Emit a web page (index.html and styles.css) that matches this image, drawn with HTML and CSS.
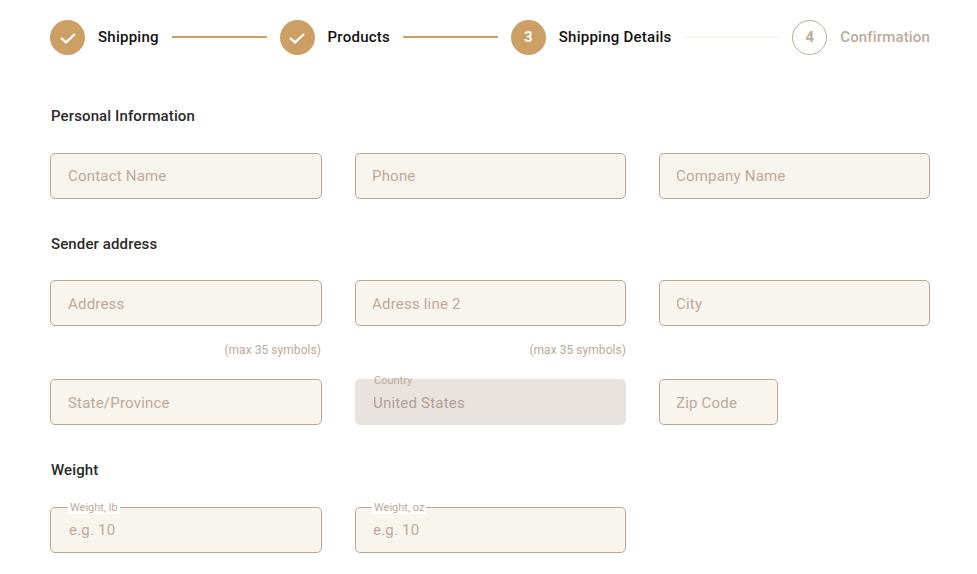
FILE: index.html
```html
<!DOCTYPE html>
<html lang="en">
<head>
    <meta charset="UTF-8">
    <meta name="viewport" content="width=device-width, initial-scale=1.0">
    <title>Shipping Details</title>
    <link rel="stylesheet" href="styles.css">
</head>
<body>
    <div class="container">
        <div class="stepper">
            <div class="step done">
                <span class="step-circle">
                    <svg width="16" height="12" viewBox="0 0 16 12"><path d="M1 6 L6 10.4 L15 2" fill="none" stroke="#fff" stroke-width="2.2"/></svg>
                </span>
                <span class="step-name">Shipping</span>
            </div>
            <div class="step-line"></div>
            <div class="step done">
                <span class="step-circle">
                    <svg width="16" height="12" viewBox="0 0 16 12"><path d="M1 6 L6 10.4 L15 2" fill="none" stroke="#fff" stroke-width="2.2"/></svg>
                </span>
                <span class="step-name">Products</span>
            </div>
            <div class="step-line"></div>
            <div class="step done">
                <span class="step-circle number">3</span>
                <span class="step-name">Shipping Details</span>
            </div>
            <div class="step-line todo"></div>
            <div class="step todo">
                <span class="step-circle number">4</span>
                <span class="step-name">Confirmation</span>
            </div>
        </div>

        <h2 class="section-title first">Personal Information</h2>
        <div class="form-row">
            <input type="text" placeholder="Contact Name">
            <input type="text" placeholder="Phone">
            <input type="text" placeholder="Company Name">
        </div>

        <h2 class="section-title tight">Sender address</h2>
        <div class="form-row low">
            <div class="field">
                <input type="text" placeholder="Address">
                <p class="hint">(max 35 symbols)</p>
            </div>
            <div class="field">
                <input type="text" placeholder="Adress line 2">
                <p class="hint">(max 35 symbols)</p>
            </div>
            <div class="field">
                <input type="text" placeholder="City">
            </div>
        </div>
        <div class="form-row low second">
            <input type="text" placeholder="State/Province">
            <div class="field">
                <label class="float-label plain">Country</label>
                <input class="disabled" type="text" value="United States" disabled>
            </div>
            <input class="zip" type="text" placeholder="Zip Code">
        </div>

        <h2 class="section-title">Weight</h2>
        <div class="form-row">
            <div class="field">
                <label class="float-label">Weight, lb</label>
                <input class="small-pad" type="text" placeholder="e.g. 10">
            </div>
            <div class="field">
                <label class="float-label">Weight, oz</label>
                <input class="small-pad" type="text" placeholder="e.g. 10">
            </div>
        </div>
    </div>
</body>
</html>
```

FILE: styles.css
```css
body {
    font-family: Roboto, 'Liberation Sans', sans-serif;
    margin: 0;
    padding: 0;
    background-color: #fff;
    color: #222;
}
.container {
    width: 880px;
    margin-left: 50px;
    padding-top: 20px;
}
.stepper {
    display: flex;
    align-items: center;
    height: 35px;
}
.step {
    display: flex;
    align-items: center;
    gap: 13px;
}
.step-circle {
    width: 35px;
    height: 35px;
    border-radius: 50%;
    box-sizing: border-box;
    background-color: #cc9f64;
    color: #fff;
    font-size: 15px;
    font-weight: 700;
    display: flex;
    justify-content: center;
    align-items: center;
}
.step-circle.number {
    padding-bottom: 1px;
}
.step-name {
    font-size: 15px;
    font-weight: 500;
    letter-spacing: 0.25px;
    color: #111;
    padding-bottom: 2px;
}
.step.todo .step-circle {
    background-color: #fff;
    border: 1px solid #bcaa9a;
    color: #bcaa9a;
}
.step.todo .step-name {
    color: #bcaa9a;
    letter-spacing: 0.15px;
}
.step-line {
    flex: 1;
    height: 2px;
    margin: 0 13px 1px;
    background-color: #cc9f64;
}
.step-line.todo {
    background-color: #f8f4ee;
}
.section-title {
    font-size: 15px;
    font-weight: 500;
    letter-spacing: 0.12px;
    line-height: 18px;
    color: #2a2a2a;
    margin: 36px 0 28px;
    padding-left: 1px;
}
.section-title.first {
    margin-top: 52px;
}
.section-title.tight {
    margin-bottom: 27px;
}
.form-row {
    display: grid;
    grid-template-columns: 272px 271px 271px;
    column-gap: 33px;
    align-items: start;
}
.form-row.second {
    margin-top: 22px;
}
.field {
    position: relative;
}
input {
    display: block;
    width: 100%;
    height: 46px;
    box-sizing: border-box;
    padding: 0 17px;
    font-family: inherit;
    font-size: 15px;
    letter-spacing: 0.2px;
    background-color: #f8f4ee;
    border: 1px solid #b9a793;
    border-radius: 5px;
    color: #bcaa9a;
}
input::placeholder {
    color: #bcaa9a;
    opacity: 1;
}
.form-row.low input {
    padding-top: 2px;
}
.form-row > input:not(:first-child),
.field:not(:first-child) input {
    text-indent: -1px;
}
input.zip {
    width: 119px;
}
input.small-pad {
    padding: 0 18px;
}
input.disabled {
    background-color: #e8e3df;
    border-color: #e8e3df;
    padding: 0 18px;
    color: #b0a196;
    opacity: 1;
}
.hint {
    font-size: 12px;
    line-height: 14px;
    letter-spacing: 0.05px;
    color: #bcaa9a;
    text-align: right;
    margin: 17px 0 0;
    padding-right: 1px;
}
.field:not(:first-child) .hint {
    padding-right: 0;
}
.float-label {
    position: absolute;
    top: -6px;
    left: 18px;
    padding: 0 2px;
    font-size: 11px;
    line-height: 13px;
    color: #bcaa9a;
    background-color: #fff;
}
.field:not(:first-child) .float-label {
    left: 17px;
}
.float-label.plain {
    top: -5px;
    background-color: transparent;
}
```
